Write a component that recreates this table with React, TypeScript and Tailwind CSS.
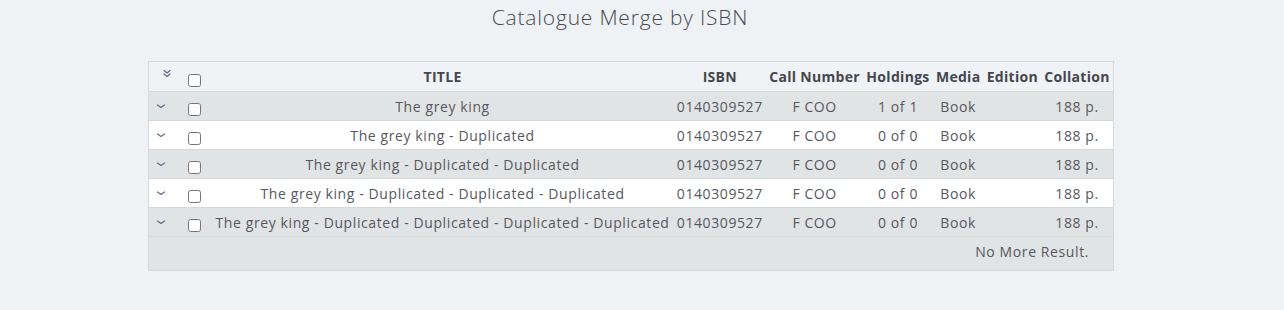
import React from 'react';

interface Record {
  title: string;
  isbn: string;
  callNumber: string;
  holdings: string;
  media: string;
  edition: string;
  collation: string;
}

const records: Record[] = [
  { title: 'The grey king', isbn: '0140309527', callNumber: 'F COO', holdings: '1 of 1', media: 'Book', edition: '', collation: '188 p.' },
  { title: 'The grey king - Duplicated', isbn: '0140309527', callNumber: 'F COO', holdings: '0 of 0', media: 'Book', edition: '', collation: '188 p.' },
  { title: 'The grey king - Duplicated - Duplicated', isbn: '0140309527', callNumber: 'F COO', holdings: '0 of 0', media: 'Book', edition: '', collation: '188 p.' },
  { title: 'The grey king - Duplicated - Duplicated - Duplicated', isbn: '0140309527', callNumber: 'F COO', holdings: '0 of 0', media: 'Book', edition: '', collation: '188 p.' },
  { title: 'The grey king - Duplicated - Duplicated - Duplicated - Duplicated', isbn: '0140309527', callNumber: 'F COO', holdings: '0 of 0', media: 'Book', edition: '', collation: '188 p.' },
];

const Chevron = ({ double = false }: { double?: boolean }) => (
  <svg width="10" height="10" viewBox="0 0 10 10" fill="none" stroke="#5d6b85" strokeWidth="1.2" strokeLinecap="round" strokeLinejoin="round">
    {double ? (
      <>
        <path d="M2 1.5 L5 4 L8 1.5" />
        <path d="M2 5 L5 7.5 L8 5" />
      </>
    ) : (
      <path d="M1.5 4 L5 6.5 L8.5 4" />
    )}
  </svg>
);

const Checkbox = () => (
  <input type="checkbox" className="w-[13px] h-[13px] align-middle translate-y-[2px]" />
);

const App: React.FC = () => {
  return (
    <div className="min-h-[310px] bg-[#eef2f5] text-[#57575f]" style={{ fontFamily: '"Open Sans", "Noto Sans", sans-serif' }}>
      <h1 className="pt-[3px] pr-[44px] text-center text-[21px] leading-[28px] tracking-[0.8px] font-light text-[#4a4a52]">
        Catalogue Merge by ISBN
      </h1>

      <div className="ml-[148px] mt-[30px] w-[966px]">
        <table className="w-full border-collapse border border-[#d5d9dc] text-[14px] tracking-[0.6px]">
          <thead>
            <tr className="h-[30px] bg-[#eff3f6] text-[#46464e]">
              <th className="w-[29px] pl-[7px] text-center align-middle"><span className="inline-block translate-y-[-3px]"><Chevron double /></span></th>
              <th className="w-[34px] pr-[1px] text-center"><Checkbox /></th>
              <th className="px-[3px] font-bold tracking-[0.3px]">TITLE</th>
              <th className="px-[3px] font-bold tracking-[0.3px]">ISBN</th>
              <th className="px-[3px] font-bold tracking-[0.3px] whitespace-nowrap">Call Number</th>
              <th className="px-[3px] font-bold tracking-[0.3px]">Holdings</th>
              <th className="px-[3px] font-bold tracking-[0.3px]">Media</th>
              <th className="px-[3px] font-bold tracking-[0.3px]">Edition</th>
              <th className="px-[3px] font-bold tracking-[0.3px]">Collation</th>
            </tr>
          </thead>
          <tbody>
            {records.map((r, i) => (
              <tr key={i} className={`h-[29px] border-t border-[#d5d9dc] ${i % 2 === 0 ? 'bg-[#e1e4e5]' : 'bg-white'}`}>
                <td className="pl-[7px] text-center"><Chevron /></td>
                <td className="pr-[1px] text-center"><Checkbox /></td>
                <td className="px-[3px] text-center whitespace-nowrap">{r.title}</td>
                <td className="px-[3px] text-center">{r.isbn}</td>
                <td className="px-[3px] text-center">{r.callNumber}</td>
                <td className="px-[3px] text-center">{r.holdings}</td>
                <td className="px-[3px] text-center">{r.media}</td>
                <td className="px-[3px] text-center">{r.edition}</td>
                <td className="px-[3px] text-center">{r.collation}</td>
              </tr>
            ))}
            <tr className="h-[34px] border-t border-[#d5d9dc] bg-[#e1e4e5]">
              <td colSpan={9} className="pr-[24px] pb-[5px] text-right">No More Result.</td>
            </tr>
          </tbody>
        </table>
      </div>
    </div>
  );
};

export default App;
